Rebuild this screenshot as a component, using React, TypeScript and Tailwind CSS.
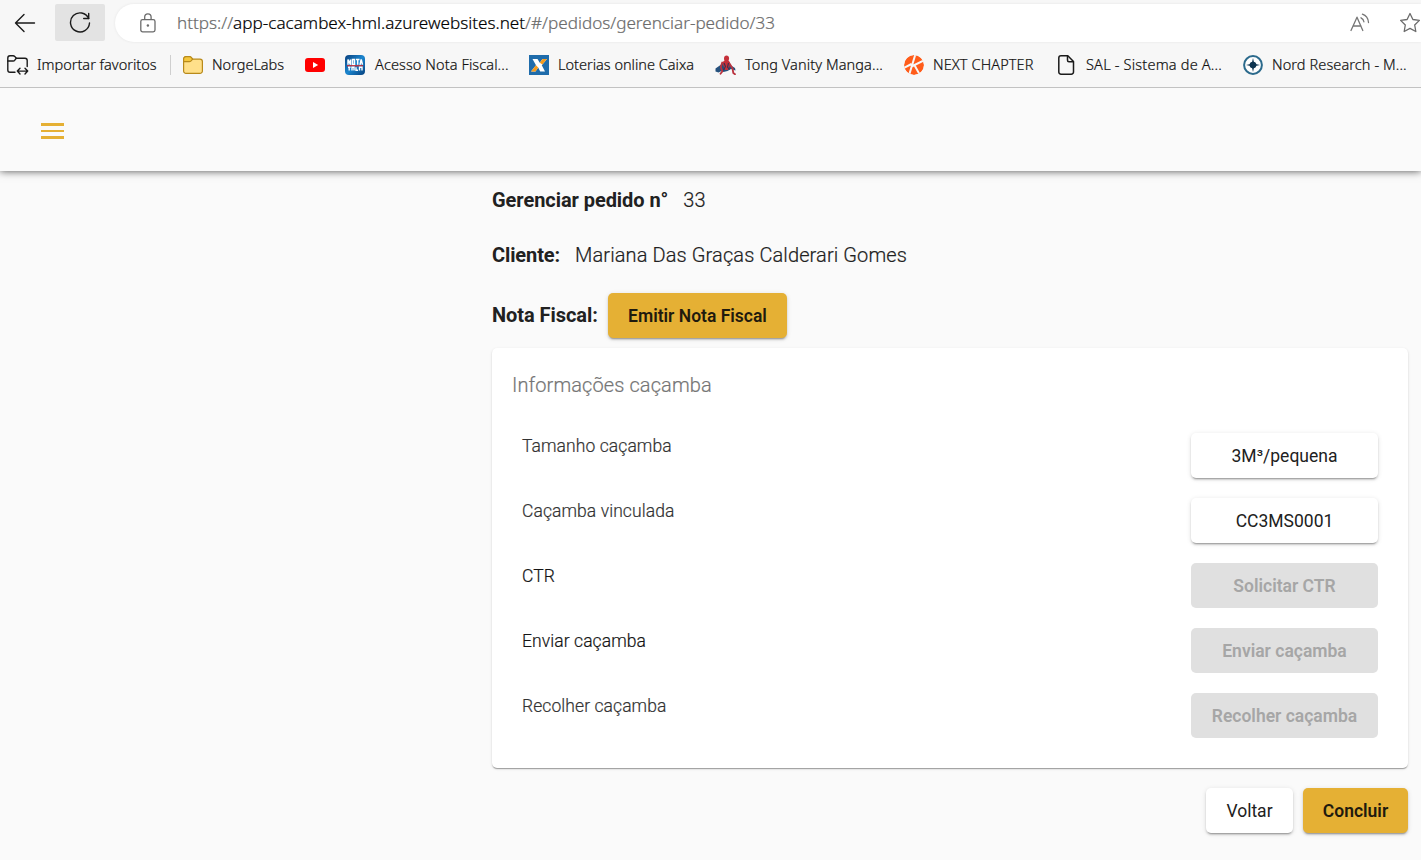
import type { ReactNode } from 'react';

const chromeFont = "font-['Noto_Sans','Open_Sans',sans-serif] font-light";

function BackIcon() {
  return (
    <svg width="22" height="20" viewBox="0 0 22 20" fill="none" stroke="#1b1b1b" strokeWidth="1.400" strokeLinecap="round" strokeLinejoin="round">
      <path d="M20.500 10H1.500M10 1.500 1.500 10l8.500 8.500" />
    </svg>
  );
}

function ReloadIcon() {
  return (
    <svg width="22" height="22" viewBox="0 0 22 22" fill="none" stroke="#1b1b1b" strokeWidth="1.400" strokeLinecap="round" strokeLinejoin="round">
      <path d="M19.700 6.500A9.500 9.500 0 1 0 20.500 11" />
      <path d="M19.700 1.500v5h-5" />
    </svg>
  );
}

function LockIcon() {
  return (
    <svg width="16" height="20" viewBox="0 0 16 20" fill="none" stroke="#6b6b6b" strokeWidth="1.300">
      <rect x="0.800" y="6.600" width="14.200" height="12.200" rx="1.800" />
      <path d="M4.700 6.600V4a3.200 3.200 0 0 1 6.400 0v2.600" />
      <circle cx="7.900" cy="12.500" r="1.200" fill="#6b6b6b" stroke="none" />
    </svg>
  );
}

function ReadAloudIcon() {
  return (
    <svg width="21" height="20" viewBox="0 0 21 20" fill="none" stroke="#767676" strokeWidth="1.300" strokeLinecap="round" strokeLinejoin="round">
      <path d="M1 17.500 7 4.200l5.800 13.300M3 13h8" />
      <path d="M11 4.800c1.700.8 2.700 2.200 2.900 4M12.400 1.200c3.600 1.200 5.800 4.200 6.100 8.300" />
    </svg>
  );
}

function StarIcon() {
  return (
    <svg width="22" height="22" viewBox="0 0 22 22" fill="none" stroke="#6b6b6b" strokeWidth="1.300" strokeLinejoin="round">
      <path d="m11 1.500 2.900 6 6.500.9-4.700 4.600 1.100 6.500L11 16.400l-5.800 3.100 1.100-6.500L1.600 8.400l6.500-.9z" />
    </svg>
  );
}

function ImportIcon() {
  return (
    <svg width="22" height="20" viewBox="0 0 22 20" fill="none" stroke="#1b1b1b" strokeWidth="1.400" strokeLinecap="round" strokeLinejoin="round">
      <path d="M8 17.300H3A2.200 2.200 0 0 1 .8 15.100V3A2.200 2.200 0 0 1 3 .8h3.200c.6 0 1.100.2 1.500.6L9.300 3.300H18a2.200 2.200 0 0 1 2.200 2.200v6" />
      <path d="M.8 6h5.400c.6 0 1-.2 1.400-.6l1.700-2.100" />
      <path d="M10.500 16.100h10M13 13.300l-2.700 2.800 2.700 2.800M18 13.300l2.700 2.800-2.700 2.800" />
    </svg>
  );
}

function FolderIcon() {
  return (
    <svg width="20" height="18" viewBox="0 0 20 18" stroke="#b88a1b" strokeWidth="1.200" strokeLinejoin="round">
      <path d="M.6 3A2.400 2.400 0 0 1 3 .6h3.400c.6 0 1.100.2 1.500.6l1.800 1.900H17a2.400 2.400 0 0 1 2.400 2.400v9.500A2.400 2.400 0 0 1 17 17.400H3A2.400 2.400 0 0 1 .6 15z" fill="#ffe08a" />
      <path d="M.6 3A2.400 2.400 0 0 1 3 .6h3.400c.6 0 1.100.2 1.500.6l1.800 1.900-1.900 2c-.4.4-.9.600-1.500.6H.6z" fill="#f5c73c" />
    </svg>
  );
}

function YoutubeIcon() {
  return (
    <svg width="20" height="14" viewBox="0 0 20 14">
      <rect width="20" height="14" rx="3" fill="#f00" />
      <path d="m8 4 5.200 3L8 10z" fill="#fff" />
    </svg>
  );
}

function NotaIcon() {
  return (
    <svg width="20" height="20" viewBox="0 0 20 20">
      <defs>
        <linearGradient id="nota" x1="0" y1="0" x2="1" y2="1">
          <stop offset="0" stopColor="#0a3f7c" />
          <stop offset="0.500" stopColor="#1b86cf" />
          <stop offset="1" stopColor="#06407d" />
        </linearGradient>
      </defs>
      <rect width="20" height="20" rx="4" fill="url(#nota)" />
      <path d="M3 9.800v-5.300l2.500 5.300v-5.300M7.500 4.500h2v5h-2zM11 4.500h3.500M12.700 4.500v5.300M15 9.800l1.200-5.300 1.300 5.300" fill="none" stroke="#fff" strokeWidth="1.500" />
      <path d="M2 10.800h16" stroke="#d9252c" strokeWidth="1.200" />
      <path d="M3 12.200h2.500M4.200 12.200V15.500M7 15.500v-3.200h2v3.200M11 12.200v3h2M14.500 15.500v-3.200H17v3.200" fill="none" stroke="#fff" strokeWidth="1.400" />
    </svg>
  );
}

function CaixaIcon() {
  return (
    <svg width="20" height="20" viewBox="0 0 20 20">
      <rect width="20" height="20" fill="#1f6cab" />
      <path d="M3.500 4h5l2.300 3.800L13.500 4H18l-5.200 6.300L16 16.500h-4.800L9.200 12.600 6.500 16.500H2l5-6.300z" fill="#fff" />
      <path d="M13.500 4H18l-4.600 5.600-2.600-1.800zM7 10.200l2.200 2.400-2.700 3.900H2z" fill="#f59b1d" />
    </svg>
  );
}

function SpiderIcon() {
  return (
    <svg width="21" height="20" viewBox="0 0 21 20">
      <path d="M.5 13.500 5.500 10l3-2.500h5l2.500 3 4 2.500.5 2.500-4.500-1.500-3.500 2-4 1-2-1-3 1.500-3-1z" fill="#25517d" />
      <path d="M11.500.5c1.600 0 2.600 1.300 2.600 3 0 .8-.3 1.500-.6 2l1.500 1.800-.5 4.200-1.500 3.500h-3L8.500 11 7.200 7.500 9.500 5.400C9 4.700 9 4 9 3.400 9 1.800 10 .5 11.500.5z" fill="#c5303a" />
      <path d="M7.200 7.500 5.800 12l1.500 4.500-1.800 2.300M14.500 8.500l3 5 .8 4.500 1.700 1.200" fill="none" stroke="#b9323e" strokeWidth="1.800" strokeLinecap="round" strokeLinejoin="round" />
      <path d="m9 8 1.500 3.500L8.500 15M13.500 8l-1 4 2 2.500" fill="none" stroke="#3c3150" strokeWidth="1.100" />
    </svg>
  );
}

function KIcon() {
  return (
    <svg width="20" height="20" viewBox="0 0 20 20">
      <defs>
        <clipPath id="kclip"><circle cx="10" cy="10" r="10" /></clipPath>
      </defs>
      <g clipPath="url(#kclip)">
        <circle cx="10" cy="10" r="10" fill="#ff5c1a" />
        <path d="M11.500-1 4.800 21M21 4.800 7.500 11.500M10.500 10.200 16.500 21M-1 13.500 7.500 9" fill="none" stroke="#f7f7f7" strokeWidth="2" />
      </g>
    </svg>
  );
}

function PageIcon() {
  return (
    <svg width="17" height="20" viewBox="0 0 17 20" fill="none" stroke="#1b1b1b" strokeWidth="1.500" strokeLinejoin="round">
      <path d="M3 .8h6.800l5.700 5.700v10.500a2.200 2.200 0 0 1-2.200 2.200H3A2.200 2.200 0 0 1 .8 17V3A2.200 2.200 0 0 1 3 .8z" />
      <path d="M9.500.8v4.400c0 .9.600 1.500 1.500 1.500h4.500" />
    </svg>
  );
}

function NordIcon() {
  return (
    <svg width="20" height="20" viewBox="0 0 20 20">
      <circle cx="10" cy="10" r="8.900" fill="#fff" stroke="#2b6a8c" strokeWidth="2" />
      <circle cx="10" cy="10" r="3.300" fill="#0e3450" />
      <path d="m10 3 1.300 5.700L17 10l-5.700 1.300L10 17l-1.300-5.700L3 10l5.700-1.300z" fill="#0e3450" />
    </svg>
  );
}

function Bookmark({ icon, children, className }: { icon: ReactNode; children?: ReactNode; className: string }) {
  return (
    <div className={`flex shrink-0 items-center ${className}`}>
      {icon}
      {children && <span className="whitespace-nowrap">{children}</span>}
    </div>
  );
}

const raised = 'shadow-[0_3px_1px_-2px_rgba(0,0,0,0.2),0_2px_2px_0_rgba(0,0,0,0.14),0_1px_5px_0_rgba(0,0,0,0.12)]';

function Button({ tone, className, children }: { tone: 'gold' | 'white' | 'off'; className: string; children: ReactNode }) {
  const tones = {
    gold: `bg-[#e5b034] font-semibold text-[#1f1a0e] ${raised}`,
    white: `bg-white font-normal text-[#212121] ${raised}`,
    off: 'bg-[#e0e0e0] font-semibold text-[#a6a6a6]',
  };
  return (
    <button className={`flex h-[45px] shrink-0 items-center justify-center rounded-[5px] pt-0.5 text-[17.5px] whitespace-nowrap ${tones[tone]} ${className}`}>
      {children}
    </button>
  );
}

const rows: { label: string; action: string; tone: 'white' | 'off'; color: string }[] = [
  { label: 'Tamanho caçamba', action: '3M³/pequena', tone: 'white', color: 'text-[#333333]' },
  { label: 'Caçamba vinculada', action: 'CC3MS0001', tone: 'white', color: 'text-[#333333]' },
  { label: 'CTR', action: 'Solicitar CTR', tone: 'off', color: 'text-[#151515]' },
  { label: 'Enviar caçamba', action: 'Enviar caçamba', tone: 'off', color: 'text-[#151515]' },
  { label: 'Recolher caçamba', action: 'Recolher caçamba', tone: 'off', color: 'text-[#333333]' },
];

export default function App() {
  return (
    <div className="flex h-[860px] w-full flex-col overflow-hidden bg-[#fafafa] font-['Roboto',sans-serif]">
      <header className={`relative z-10 shrink-0 border-b border-[#c2c2c2] bg-[#f7f7f7] ${chromeFont}`}>
        <div className="flex h-[46px] items-start pt-1">
          <div className="flex h-[37px] w-[55px] items-center pl-[14px]"><BackIcon /></div>
          <div className="flex h-[37px] w-[50px] items-center justify-center rounded-[2px] bg-[#e3e3e3]"><ReloadIcon /></div>
          <div className="ml-[10px] flex h-[38px] flex-1 items-center overflow-hidden rounded-l-full bg-white pl-[25px] shadow-[0_0_3px_rgba(0,0,0,0.08)]">
            <LockIcon />
            <span className="ml-[21px] flex-1 pb-px text-[17.1px] whitespace-nowrap text-[#6b6b6b] [-webkit-text-stroke:0.2px]">
              https://<span className="text-black">app-cacambex-hml.azurewebsites.net</span>/#/pedidos/gerenciar-pedido/33
            </span>
            <div className="mr-[28px] shrink-0"><ReadAloudIcon /></div>
            <div className="shrink-0"><StarIcon /></div>
          </div>
        </div>
        <nav className="flex h-[41px] items-center pb-1 text-[14.5px] text-[#111111] [-webkit-text-stroke:0.2px]">
          <Bookmark className="w-[170px] gap-[8px] pl-[7px]" icon={<ImportIcon />}>Importar favoritos</Bookmark>
          <div className="h-5 w-px bg-[#cfcfcf]" />
          <Bookmark className="w-[134px] gap-[9px] pl-3" icon={<FolderIcon />}>NorgeLabs</Bookmark>
          <Bookmark className="w-[40px]" icon={<YoutubeIcon />} />
          <Bookmark className="w-[184px] gap-[10px] tracking-[0.1px]" icon={<NotaIcon />}>Acesso Nota Fiscal...</Bookmark>
          <Bookmark className="w-[186px] gap-[9px]" icon={<CaixaIcon />}>Loterias online Caixa</Bookmark>
          <Bookmark className="w-[189px] gap-[9px] tracking-[0.1px]" icon={<SpiderIcon />}>Tong Vanity Manga...</Bookmark>
          <Bookmark className="w-[154px] gap-[9px] tracking-[0.1px]" icon={<KIcon />}>NEXT CHAPTER</Bookmark>
          <Bookmark className="w-[185px] gap-[11px] tracking-[0.2px]" icon={<PageIcon />}>SAL - Sistema de A...</Bookmark>
          <Bookmark className="gap-[9px] tracking-[0.1px]" icon={<NordIcon />}>Nord Research - M...</Bookmark>
        </nav>
      </header>

      <div className="flex h-[83px] shrink-0 items-center pl-[41px] shadow-[0_0_8px_rgba(0,0,0,0.7)]">
        <button className="flex flex-col gap-[4px] pt-[3px]">
          <span className="h-[2.5px] w-[23px] bg-[#e5b034]" />
          <span className="h-[2.5px] w-[23px] bg-[#e5b034]" />
          <span className="h-[2.5px] w-[23px] bg-[#e5b034]" />
        </button>
      </div>

      <main className="ml-[492px] flex w-[916px] flex-col pt-[17px] text-[20px] text-[#212121]">
        <div className="flex h-6 items-center gap-[15px]">
          <strong className="font-bold tracking-[-0.06px]">Gerenciar pedido n°</strong>
          <span className="font-light [-webkit-text-stroke:0.2px]">33</span>
        </div>
        <div className="mt-[31px] flex h-6 items-center gap-[15px]">
          <strong className="font-bold tracking-[-0.1px]">Cliente:</strong>
          <span className="font-light tracking-[0.11px] [-webkit-text-stroke:0.2px]">Mariana Das Graças Calderari Gomes</span>
        </div>
        <div className="mt-[26px] flex h-[45px] items-center">
          <strong className="w-[116px] pb-0.5 font-bold tracking-[-0.05px]">Nota Fiscal:</strong>
          <Button tone="gold" className="w-[179px]">Emitir Nota Fiscal</Button>
        </div>
        <section className="mt-[10px] h-[420px] rounded-[5px] bg-white pt-[25px] pr-[30px] pl-5 shadow-[0_2px_1px_-1px_rgba(0,0,0,0.2),0_1px_1px_0_rgba(0,0,0,0.14),0_1px_3px_0_rgba(0,0,0,0.12)]">
          <h2 className="h-6 leading-6 font-light tracking-[0.1px] text-[#757575] [-webkit-text-stroke:0.2px]">Informações caçamba</h2>
          <div className="mt-9 flex flex-col gap-5">
            {rows.map((r) => (
              <div key={r.label} className="flex h-[45px] justify-between pl-[10px]">
                <span className={`h-[26px] text-[17.5px] leading-[26px] font-light tracking-[0.08px] [-webkit-text-stroke:0.2px] ${r.color}`}>{r.label}</span>
                <Button tone={r.tone} className="w-[187px]">{r.action}</Button>
              </div>
            ))}
          </div>
        </section>
        <div className="mt-5 flex justify-end gap-[10px]">
          <Button tone="white" className="w-[87px]">Voltar</Button>
          <Button tone="gold" className="w-[105px]">Concluir</Button>
        </div>
      </main>
    </div>
  );
}
